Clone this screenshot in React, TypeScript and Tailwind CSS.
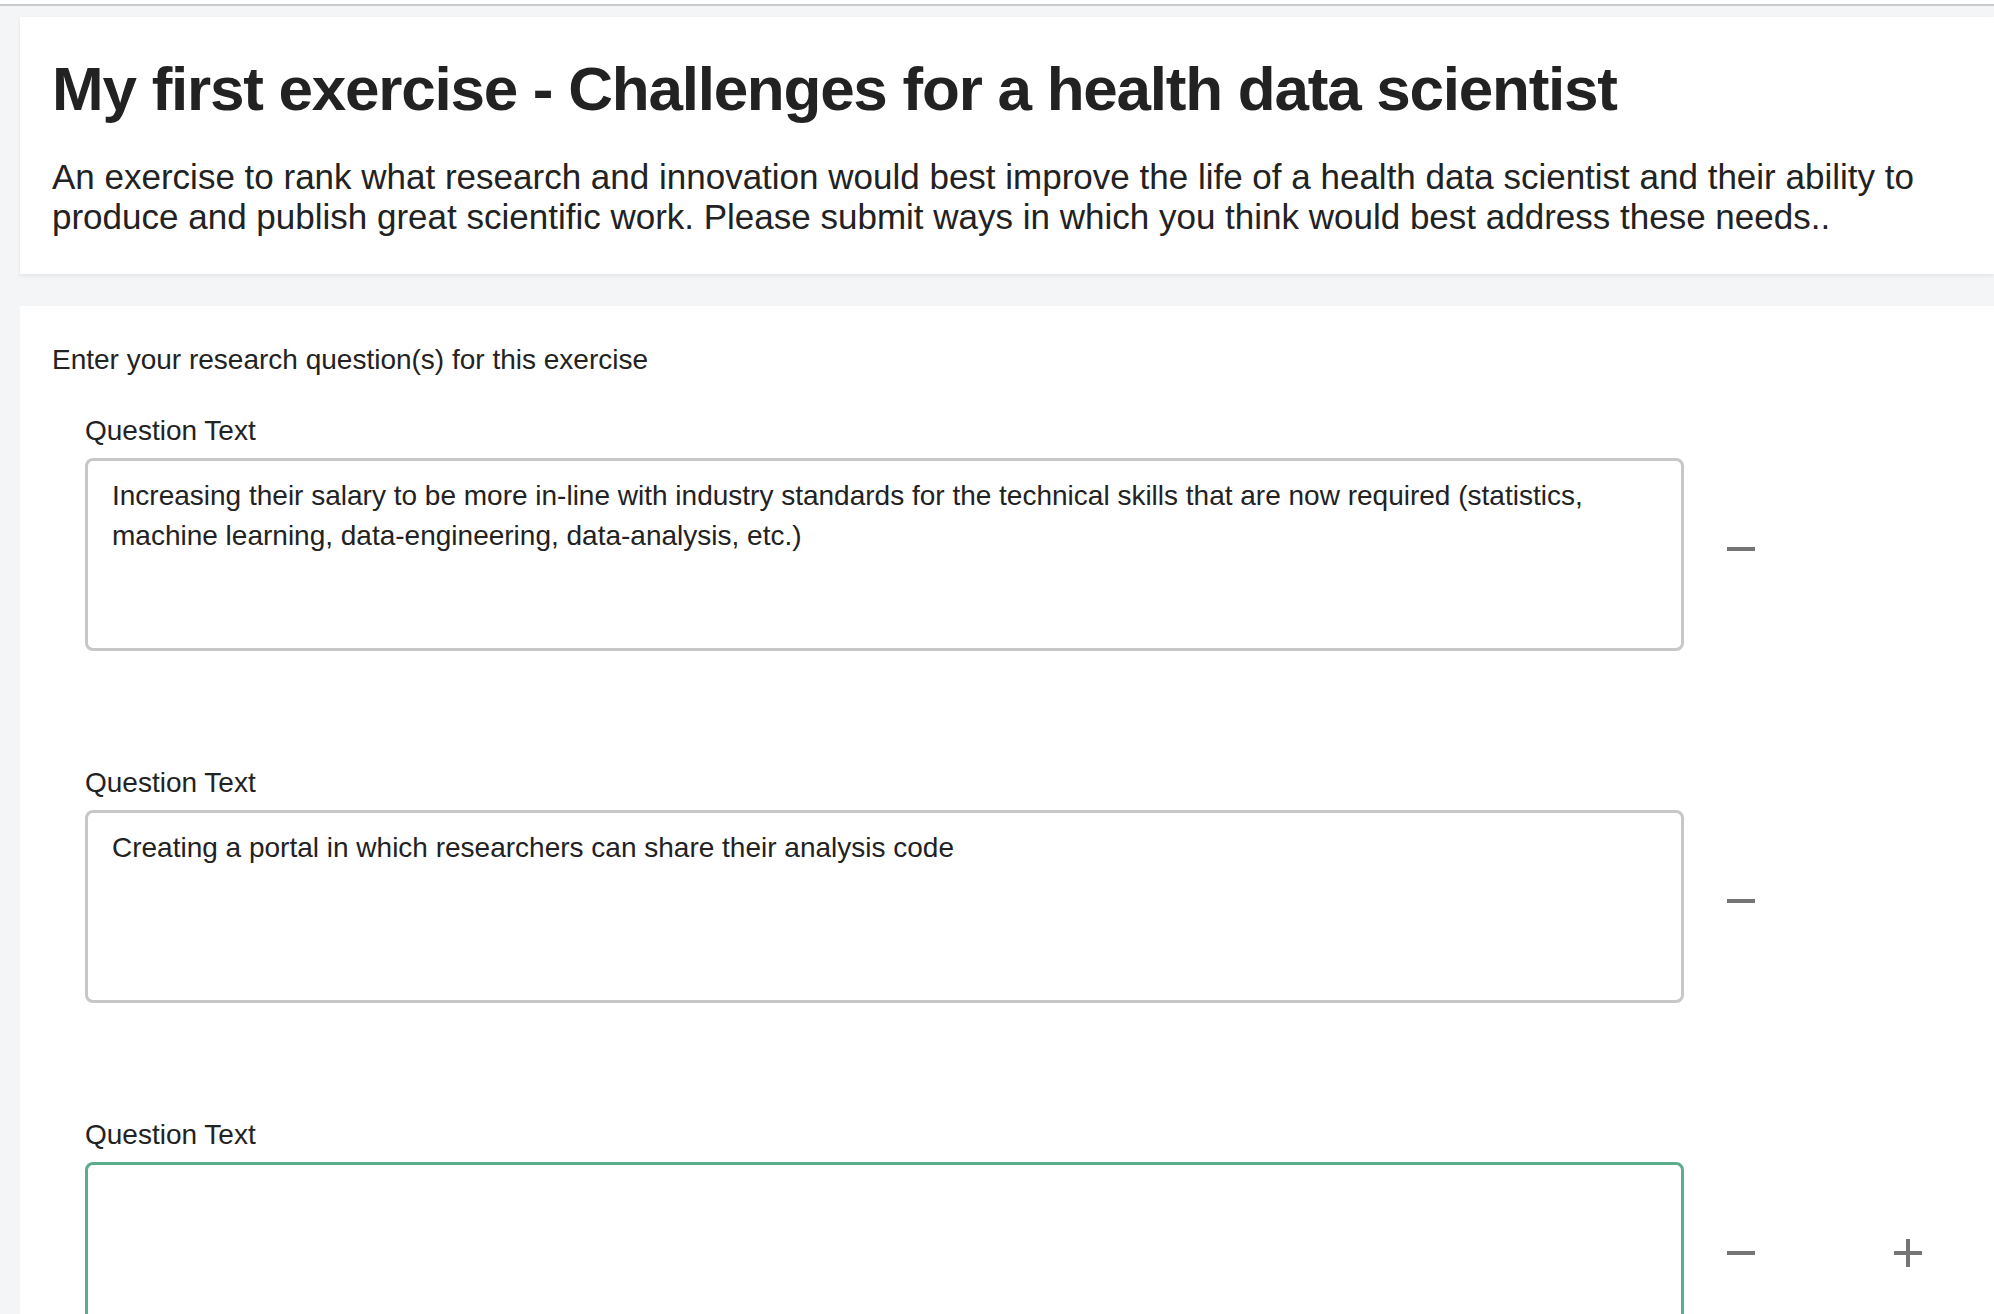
import React from "react";

const font = { fontFamily: '"Liberation Sans", Arial, Helvetica, sans-serif' };

function MinusIcon() {
  return (
    <svg width="28" height="4" viewBox="0 0 28 4" className="block">
      <rect x="0" y="0" width="28" height="4" fill="#757575" />
    </svg>
  );
}

function PlusIcon() {
  return (
    <svg width="28" height="28" viewBox="0 0 28 28" className="block">
      <rect x="0" y="12" width="28" height="4" fill="#757575" />
      <rect x="12" y="0" width="4" height="28" fill="#757575" />
    </svg>
  );
}

function Question({ value, active, last }: { value: string; active?: boolean; last?: boolean }) {
  return (
    <div className="ml-[33px]">
      <div className="text-[28px] leading-[40px] text-[#222] mb-[7px]">Question Text</div>
      <div className="flex items-center">
        <textarea
          readOnly
          defaultValue={value}
          style={font}
          className={
            "w-[1599px] h-[193px] shrink-0 resize-none outline-none rounded-[8px] border-[3px] bg-white px-[24px] pt-[15px] text-[28px] leading-[40px] text-[#222] " +
            (active ? "border-[#5bad8c]" : "border-[#c7c7c7]")
          }
        />
        <div className="ml-[43px] mb-[12px] flex items-center">
          <MinusIcon />
          {last && (
            <div className="ml-[139px]">
              <PlusIcon />
            </div>
          )}
        </div>
      </div>
    </div>
  );
}

export default function App() {
  return (
    <div style={font} className="relative min-h-screen w-full overflow-hidden bg-[#f4f5f7] text-[#222]">
      <div className="h-[4px] bg-white" />
      <div className="h-[2px] bg-[#c9cacc]" />
      <div className="pt-[11px] pl-[20px]">
        <div className="bg-white pl-[32px] pr-[40px] pt-[39px] pb-[37px] shadow-[0_2px_4px_rgba(0,0,0,0.07)]">
          <h1 className="text-[62px] leading-[65px] font-bold tracking-[-0.02em] text-[#222] whitespace-nowrap">
            My first exercise - Challenges for a health data scientist
          </h1>
          <p className="mt-[36px] text-[35px] leading-[40px] text-[#222] w-[1880px]">
            An exercise to rank what research and innovation would best improve the life of a health data scientist and
            their ability to produce and publish great scientific work. Please submit ways in which you think would best
            address these needs..
          </p>
        </div>
        <div className="mt-[32px] bg-white pl-[32px] pt-[34px] pb-[40px] flex flex-col gap-[112px]">
          <div className="flex flex-col gap-[31px]">
            <div className="text-[28px] leading-[40px] text-[#222]">Enter your research question(s) for this exercise</div>
            <Question value="Increasing their salary to be more in-line with industry standards for the technical skills that are now required (statistics, machine learning, data-engineering, data-analysis, etc.)" />
          </div>
          <Question value="Creating a portal in which researchers can share their analysis code" />
          <Question value="" active last />
        </div>
      </div>
      <div className="pointer-events-none absolute bottom-0 left-0 right-0 h-[40px] bg-gradient-to-b from-transparent to-black/[0.035]" />
    </div>
  );
}
